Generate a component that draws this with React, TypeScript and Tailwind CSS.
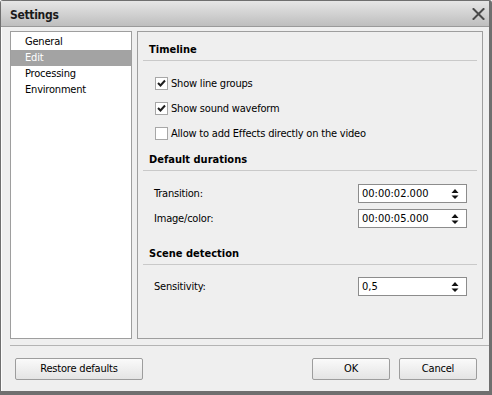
import { useState } from 'react'

const font = { fontFamily: '"DejaVu Sans Condensed", "DejaVu Sans", sans-serif' }

function CloseIcon() {
  return (
    <svg width="13" height="12" viewBox="0 0 13 12">
      <path d="M1.5 1 L11.5 11 M11.5 1 L1.5 11" stroke="#4a4a4a" strokeWidth="2" strokeLinecap="square" />
    </svg>
  )
}

function Checkbox({ checked, label }: { checked: boolean; label: string }) {
  return (
    <div className="flex h-[13px] items-center gap-[3px]">
      <span className="flex h-[13px] w-[13px] items-center justify-center border border-[#a7a7a7] bg-white">
        {checked && (
          <svg width="9" height="9" viewBox="0 0 9 9">
            <path d="M1 4 L3.5 6.5 L8 1.5" fill="none" stroke="#1e1e1e" strokeWidth="2" />
          </svg>
        )}
      </span>
      <span className="pt-[1px] text-[11px] tracking-[-0.2px] text-black">{label}</span>
    </div>
  )
}

function Spinner({ value }: { value: string }) {
  return (
    <div className="flex h-[19px] w-[109px] items-center justify-between border border-[#8c8c8c] bg-white pl-[3px] pr-[7px]">
      <span className="text-[11px] leading-none text-black">{value}</span>
      <svg width="8" height="12" viewBox="0 0 8 12">
        <path d="M0.5 5 L4 1 L7.5 5 Z" fill="#111" />
        <path d="M0.5 7.5 L7.5 7.5 L4 11 Z" fill="#111" />
      </svg>
    </div>
  )
}

function Section({ title }: { title: string }) {
  return (
    <div className="mx-[5px] border-b border-[#c9c9c9] pb-[3px] pl-[6px] pt-[11px]">
      <div className="text-[11px] font-bold leading-[14px] text-black">{title}</div>
    </div>
  )
}

function Field({ label, value }: { label: string; value: string }) {
  return (
    <div className="flex h-[19px] items-center justify-between pl-[16px] pr-[15px]">
      <span className="pt-[1px] text-[11px] tracking-[-0.2px] text-black">{label}</span>
      <Spinner value={value} />
    </div>
  )
}

function Button({ label, width }: { label: string; width: string }) {
  return (
    <button
      className={`${width} h-[22px] rounded-[2px] border border-[#9d9d9d] bg-gradient-to-b from-[#fafafa] to-[#e4e4e4] text-[11px] tracking-[-0.2px] text-black`}
    >
      {label}
    </button>
  )
}

export default function App() {
  const [selected, setSelected] = useState('Edit')
  const items = ['General', 'Edit', 'Processing', 'Environment']

  return (
    <div className="h-[395px] w-[492px] bg-white" style={font}>
      <div className="flex h-full w-full flex-col rounded-t-[3px] border border-r-[3px] border-b-[4px] border-[#6f6f6f] bg-[#efefef]">
        <div className="flex h-[26px] items-center justify-between border-b border-[#9a9a9a] bg-gradient-to-b from-[#e6e6e6] to-[#bebebe] pl-[9px] pr-[4px]">
          <span className="pt-[3px] text-[12px] font-bold tracking-[-0.3px] text-[#1a1a1a]">Settings</span>
          <CloseIcon />
        </div>

        <div className="flex flex-1 flex-col border-l border-[#fdfdfd] pl-[8px] pt-[4px]">
          <div className="flex h-[308px] gap-[5px]">
            <div className="w-[122px] border border-[#9e9e9e] bg-white pt-[2px]">
              {items.map((it) => (
                <div
                  key={it}
                  onClick={() => setSelected(it)}
                  className={`flex h-[16px] items-center pl-[14px] pt-[1px] text-[11px] tracking-[-0.2px] ${
                    selected === it ? 'bg-[#a3a3a3] text-white' : 'text-black'
                  }`}
                >
                  {it}
                </div>
              ))}
            </div>

            <div className="w-[346px] border border-[#9e9e9e] bg-[#efefef]">
              <Section title="Timeline" />
              <div className="flex flex-col gap-[12px] pl-[17px] pt-[16px]">
                <Checkbox checked label="Show line groups" />
                <Checkbox checked label="Show sound waveform" />
                <Checkbox checked={false} label="Allow to add Effects directly on the video" />
              </div>
              <div className="mt-[2px]">
                <Section title="Default durations" />
              </div>
              <div className="flex flex-col gap-[6px] pt-[13px]">
                <Field label="Transition:" value="00:00:02.000" />
                <Field label="Image/color:" value="00:00:05.000" />
              </div>
              <div className="mt-[8px]">
                <Section title="Scene detection" />
              </div>
              <div className="pt-[12px]">
                <Field label="Sensitivity:" value="0,5" />
              </div>
            </div>
          </div>

          <div className="mt-[6px] border-t border-[#b4b4b4]" />

          <div className="flex items-center justify-between pl-[5px] pr-[12px] pt-[12px]">
            <Button label="Restore defaults" width="w-[128px]" />
            <div className="flex gap-[9px]">
              <Button label="OK" width="w-[78px]" />
              <Button label="Cancel" width="w-[78px]" />
            </div>
          </div>
        </div>
      </div>
    </div>
  )
}
